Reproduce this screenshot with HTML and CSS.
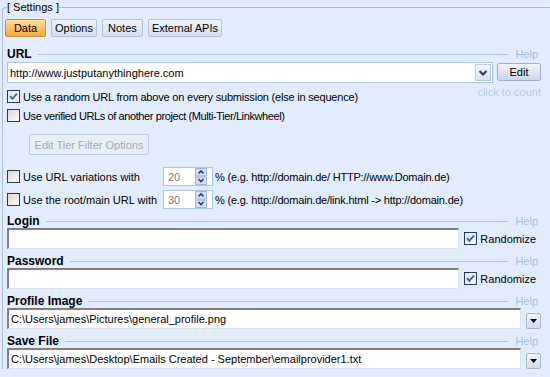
FILE: index.html
```html
<!DOCTYPE html>
<html lang="en">
<head>
    <meta charset="UTF-8">
    <title>Settings</title>
    <link rel="stylesheet" href="styles.css">
</head>
<body>
    <fieldset class="settings">
        <legend>[ Settings ]</legend>
        <div class="tabs">
            <span class="tab active">Data</span>
            <span class="tab">Options</span>
            <span class="tab">Notes</span>
            <span class="tab">External APIs</span>
        </div>

        <div class="section-head url-head">
            <span class="label">URL</span><span class="rule"></span><span class="help">Help</span>
        </div>
        <div class="url-row">
            <div class="combo">
                <span class="combo-text">http://www.justputanythinghere.com</span>
                <span class="combo-btn">
                    <svg width="14" height="15" viewBox="0 0 14 15"><path d="M3.5 6 L7 9.5 L10.5 6" fill="none" stroke="#2b3f6c" stroke-width="2.2"/></svg>
                </span>
            </div>
            <button class="btn edit-btn">Edit</button>
        </div>
        <div class="check-row first">
            <span class="check on"><svg width="11" height="11" viewBox="0 0 11 11"><path d="M2 5.2 L4.3 7.8 L9 2.6" fill="none" stroke="#3468cc" stroke-width="2"/></svg></span>
            <span class="opt">Use a random URL from above on every submission (else in sequence)</span>
            <span class="count">click to count</span>
        </div>
        <div class="check-row">
            <span class="check"></span>
            <span class="opt narrow">Use verified URLs of another project (Multi-Tier/Linkwheel)</span>
        </div>
        <button class="btn tier-btn" disabled>Edit Tier Filter Options</button>

        <div class="spin-row first">
            <span class="spin-label"><span class="check"></span>Use URL variations with</span>
            <div class="spin">
                <span class="spin-val">20</span>
                <svg class="spin-btns" width="12" height="17" viewBox="0 0 12 17">
                    <rect x="0.5" y="0.5" width="11" height="7.5" fill="#d3e0f3" stroke="#9db6dc"/>
                    <rect x="0.5" y="9" width="11" height="7.5" fill="#d3e0f3" stroke="#9db6dc"/>
                    <path d="M3.5 5.5 L6 3 L8.5 5.5" fill="none" stroke="#2b3f6c" stroke-width="1.6"/>
                    <path d="M3.5 11 L6 13.5 L8.5 11" fill="none" stroke="#2b3f6c" stroke-width="1.6"/>
                </svg>
            </div>
            <span class="opt">% (e.g. http://domain.de/ HTTP://www.Domain.de)</span>
        </div>
        <div class="spin-row">
            <span class="spin-label"><span class="check"></span>Use the root/main URL with</span>
            <div class="spin">
                <span class="spin-val">30</span>
                <svg class="spin-btns" width="12" height="17" viewBox="0 0 12 17">
                    <rect x="0.5" y="0.5" width="11" height="7.5" fill="#d3e0f3" stroke="#9db6dc"/>
                    <rect x="0.5" y="9" width="11" height="7.5" fill="#d3e0f3" stroke="#9db6dc"/>
                    <path d="M3.5 5.5 L6 3 L8.5 5.5" fill="none" stroke="#2b3f6c" stroke-width="1.6"/>
                    <path d="M3.5 11 L6 13.5 L8.5 11" fill="none" stroke="#2b3f6c" stroke-width="1.6"/>
                </svg>
            </div>
            <span class="opt">% (e.g. http://domain.de/link.html -&gt; http://domain.de)</span>
        </div>

        <div class="section-head">
            <span class="label">Login</span><span class="rule"></span><span class="help">Help</span>
        </div>
        <div class="field-row">
            <div class="textbox"></div>
            <span class="randomize"><span class="check on"><svg width="11" height="11" viewBox="0 0 11 11"><path d="M2 5.2 L4.3 7.8 L9 2.6" fill="none" stroke="#3468cc" stroke-width="2"/></svg></span>Randomize</span>
        </div>

        <div class="section-head">
            <span class="label">Password</span><span class="rule"></span><span class="help">Help</span>
        </div>
        <div class="field-row">
            <div class="textbox"></div>
            <span class="randomize"><span class="check on"><svg width="11" height="11" viewBox="0 0 11 11"><path d="M2 5.2 L4.3 7.8 L9 2.6" fill="none" stroke="#3468cc" stroke-width="2"/></svg></span>Randomize</span>
        </div>

        <div class="section-head">
            <span class="label">Profile Image</span><span class="rule"></span><span class="help">Help</span>
        </div>
        <div class="field-row file">
            <div class="textbox">C:\Users\james\Pictures\general_profile.png</div>
            <span class="drop-btn"><svg width="7" height="4" viewBox="0 0 7 4"><path d="M0 0 H7 L3.5 4 Z" fill="#000"/></svg></span>
        </div>

        <div class="section-head">
            <span class="label">Save File</span><span class="rule"></span><span class="help">Help</span>
        </div>
        <div class="field-row file">
            <div class="textbox">C:\Users\james\Desktop\Emails Created - September\emailprovider1.txt</div>
            <span class="drop-btn"><svg width="7" height="4" viewBox="0 0 7 4"><path d="M0 0 H7 L3.5 4 Z" fill="#000"/></svg></span>
        </div>
    </fieldset>
</body>
</html>
```
FILE: styles.css
```css
body {
    margin: 0;
    background-color: #e1edfe;
    font-family: "Liberation Sans", Arial, sans-serif;
    font-size: 11px;
    color: #000;
    overflow: hidden;
}
.settings {
    margin: 0 0 0 2px;
    padding: 0 9px 0 4px;
    min-width: 0;
    border: 1px solid #a7bfdc;
    border-right: 0;
    border-bottom: 0;
    border-top-left-radius: 4px;
}
legend {
    padding: 0;
    line-height: 14px;
}
.tabs {
    display: flex;
    gap: 5px;
    margin: 5px 0 0 -2px;
}
.tab {
    box-sizing: border-box;
    height: 18px;
    min-width: 41px;
    padding: 0 3px;
    line-height: 16px;
    text-align: center;
    border: 1px solid #b3c3d8;
    border-radius: 2px;
    background: linear-gradient(#eef3fa, #d5dfed);
}
.tab.active {
    border-color: #cf8f36;
    background: linear-gradient(#ffdc98, #f6a93c);
}
.section-head {
    display: flex;
    align-items: center;
    height: 14px;
    margin-top: 5px;
    padding-right: 3px;
}
.url-head {
    margin-top: 10px;
}
.label {
    font-weight: bold;
    font-size: 12px;
}
.rule {
    flex: 1;
    height: 1px;
    margin: 0 7px 0 6px;
    background-color: #a5c5ee;
}
.help {
    color: #9dc0ea;
}
.url-row {
    display: flex;
    align-items: flex-start;
    gap: 4px;
    margin-top: 1px;
}
.combo {
    flex: 1;
    box-sizing: border-box;
    height: 21px;
    display: flex;
    align-items: center;
    padding: 1px 1px 1px 2px;
    border: 1px solid #a9c6ea;
    background-color: #fff;
}
.combo-text {
    flex: 1;
}
.combo-btn {
    box-sizing: border-box;
    width: 16px;
    height: 17px;
    display: flex;
    align-items: center;
    justify-content: center;
    border: 1px solid #b6cbe8;
    background: linear-gradient(#f3f7fd, #d6e2f3);
}
.btn {
    font: inherit;
    color: #000;
    padding: 0;
    border: 1px solid #9fb3cd;
    border-radius: 2px;
    background: linear-gradient(#f1f5fb, #c9d7ea);
}
.edit-btn {
    width: 44px;
    height: 18px;
    margin-top: 1px;
}
.check-row {
    display: flex;
    align-items: center;
    gap: 3px;
    height: 19px;
}
.check-row.first {
    margin-top: 4px;
}
.opt {
    letter-spacing: -0.2px;
}
.opt.narrow {
    letter-spacing: -0.4px;
}
.count {
    margin-left: auto;
    align-self: flex-start;
    line-height: 11px;
    color: #b5cde9;
}
.check {
    flex: none;
    box-sizing: border-box;
    width: 13px;
    height: 13px;
    display: flex;
    align-items: center;
    justify-content: center;
    border: 1px solid #1f3c6e;
    background: linear-gradient(135deg, #d8d8d1, #fdfdfc);
}
.check.on {
    background: linear-gradient(135deg, #e4e4de, #fdfdfc);
}
.tier-btn {
    display: block;
    width: 120px;
    height: 21px;
    margin: 9px 0 0 22px;
    color: #a3abb6;
    border-color: #bfcde0;
    background: #e6eef9;
}
.spin-row {
    display: grid;
    grid-template-columns: 154px 50px auto;
    column-gap: 2px;
    align-items: center;
    height: 19px;
    margin-top: 4px;
}
.spin-row.first {
    margin-top: 12px;
}
.spin-label {
    display: flex;
    align-items: center;
    gap: 3px;
}
.spin {
    box-sizing: border-box;
    height: 19px;
    display: flex;
    align-items: center;
    padding-left: 4px;
    border: 1px solid #a9c6ea;
    background-color: #fff;
    color: #7a7a7a;
}
.spin-val {
    flex: 1;
}
.spin-btns {
    margin-right: 5px;
}
.field-row {
    display: flex;
    align-items: center;
    gap: 5px;
    padding-right: 5px;
}
.field-row.file {
    align-items: flex-end;
    padding-right: 0;
}
.textbox {
    flex: 1;
    box-sizing: border-box;
    height: 21px;
    padding-left: 2px;
    line-height: 18px;
    white-space: nowrap;
    overflow: hidden;
    background-color: #fff;
    border-style: solid;
    border-width: 2px 1px 1px 2px;
    border-color: #808080 #dbe3ed #dbe3ed #808080;
}
.randomize {
    display: flex;
    align-items: center;
    gap: 3px;
}
.drop-btn {
    box-sizing: border-box;
    width: 15px;
    height: 16px;
    display: flex;
    align-items: center;
    justify-content: center;
    border: 1px solid #a6b7ce;
    border-radius: 2px;
    background: linear-gradient(#f4f7fb, #d2dcea);
}
```
